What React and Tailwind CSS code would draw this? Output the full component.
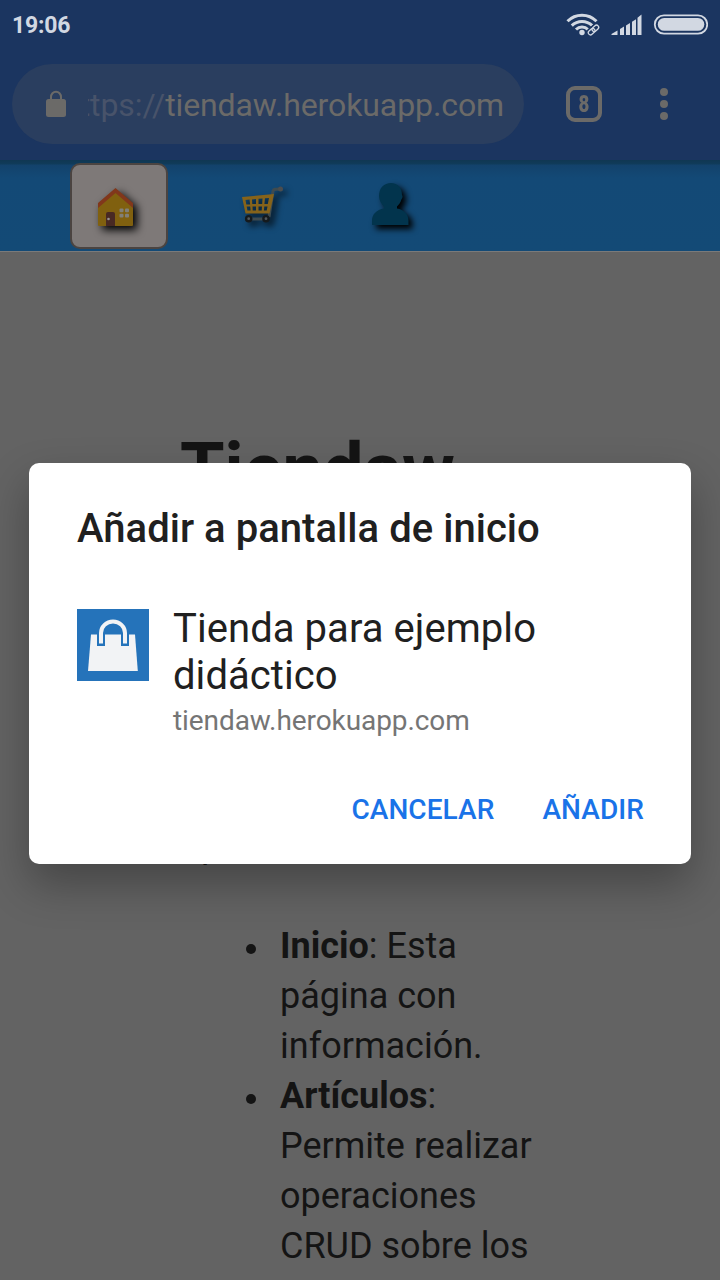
import React from "react";

function StatusBar() {
  return (
    <div className="flex h-12 items-center justify-between pl-3 pr-3 text-[#d2d8e2]">
      <span className="pt-0.5 text-[23px] font-bold leading-none tracking-[-0.2px]">19:06</span>
      <svg width="142" height="24" viewBox="0 0 142 24" fill="none" className="h-6 w-[142px]">
        <g stroke="#d2d8e2" strokeWidth="3">
          <path d="M1.5 9.3a20.5 20.5 0 0 1 29 0" />
          <path d="M5.8 13.6a14.5 14.5 0 0 1 20.4 0" />
          <path d="M10 17.5a8.5 8.5 0 0 1 12 0" />
        </g>
        <circle cx="16" cy="20.5" r="2.7" fill="#d2d8e2" />
        <g transform="rotate(-42 27.5 18)" fill="#1b3560" stroke="#1b3560" strokeWidth="4">
          <rect x="21.8" y="15.7" width="11.4" height="4.6" rx="2.3" />
        </g>
        <g transform="rotate(-42 27.5 18)" stroke="#d2d8e2" strokeWidth="1.3">
          <rect x="21.3" y="15.8" width="7.4" height="4.4" rx="2.2" />
          <rect x="26.3" y="15.8" width="7.4" height="4.4" rx="2.2" />
        </g>
        <g fill="#d2d8e2">
          <path d="M45.5 23v-1l6-3.5V23z" />
          <path d="M54 23v-6l4-2.5V23z" />
          <path d="M60 23v-9.5l4-2.5v12z" />
          <path d="M66 23V9.800l4-2.600V23z" />
          <path d="M71.500 23V5.800l4-3.300V23z" />
        </g>
        <rect x="88.800" y="3.300" width="52.400" height="18.400" rx="9.200" stroke="#d2d8e2" strokeWidth="1.8" />
        <rect x="91.800" y="6" width="46.500" height="12.800" rx="6.400" fill="#d2d8e2" />
      </svg>
    </div>
  );
}

function AddressBar() {
  return (
    <div className="flex h-28 items-start pl-3 pt-4 text-[#6b6a68]">
      <div className="flex h-20 w-[512px] items-center rounded-full bg-[#2a3e5f] pl-[34px]">
        <svg width="20" height="28" viewBox="0 0 20 28" className="shrink-0">
          <path d="M5 10V7a5 5.300 0 0 1 10 0v3" fill="none" stroke="#6b6a68" strokeWidth="2" />
          <rect y="9" width="20" height="18" rx="2.500" fill="#6b6a68" />
        </svg>
        <div className="ml-[22px] mt-px flex w-[416px] justify-end overflow-hidden whitespace-nowrap text-[32px] leading-[44px] tracking-[-0.1px]">
          <span className="text-[#48536a]">https://</span>
          <span>tiendaw.herokuapp.com</span>
        </div>
      </div>
      <div className="ml-[42px] mt-[22px] flex size-9 items-center justify-center rounded-[9px] border-4 border-[#6b6a68] text-[24px] font-black leading-none">
        <span className="scale-x-[0.78]">8</span>
      </div>
      <div className="ml-[58px] mt-6 flex flex-col gap-1">
        <i className="size-2 rounded-full bg-[#6b6a68]" />
        <i className="size-2 rounded-full bg-[#6b6a68]" />
        <i className="size-2 rounded-full bg-[#6b6a68]" />
      </div>
    </div>
  );
}

function HouseIcon() {
  return (
    <svg width="38" height="40" viewBox="0 0 38 40" className="overflow-visible drop-shadow-[4px_4px_4px_#000000]">
      <path d="M1 18 18.500 3 36 18v19a1 1 0 0 1-1 1H2a1 1 0 0 1-1-1z" fill="#80600f" />
      <path d="m1 15 17.500-15L36 15v5L18.500 5 1 20z" fill="#81371b" />
      <path d="M9 38V26a2 2 0 0 1 2-2h5a2 2 0 0 1 2 2v12z" fill="#482923" />
      <circle cx="11.500" cy="31" r="1.300" fill="#969190" />
      <g fill="#828078">
        <rect x="22.500" y="20.500" width="4" height="3.800" rx="1" />
        <rect x="28" y="20.500" width="4" height="3.800" rx="1" />
        <rect x="22.500" y="25.800" width="4" height="3.800" rx="1" />
        <rect x="28" y="25.800" width="4" height="3.800" rx="1" />
      </g>
    </svg>
  );
}

function CartIcon() {
  return (
    <svg width="42" height="38" viewBox="0 0 42 38" fill="none" className="overflow-visible drop-shadow-[4px_4px_3px_#000000b0]">
      <path d="m27 31 4-26c.4-2 2-2 8-2" stroke="#3e4b50" strokeWidth="3" />
      <circle cx="38.500" cy="3" r="2.500" fill="#4b4d4e" />
      <path
        fillRule="evenodd"
        d="M0 11 32 8l-4.500 19.500h-24zM3.500 14l.8 4.400h3.800L7.500 13.600zM10 13.400l.3 4.600H14v-5zM16.500 12.800v5.200h3.700l.3-5.600zM23 12.200l-.6 5.800h3.400l1.200-6.100zM4.700 20.500l.7 4h3.200l-.4-4zM10.500 20.500l.2 4H14v-4zM16.500 20.500v4h3.200l.3-4zM22.300 20.500l-.4 4h2.800l.8-4z"
        fill="#86631a"
      />
      <path d="M7 33h18" stroke="#3e4b50" strokeWidth="3" />
      <g fill="#52585b" stroke="#151a1d" strokeWidth="2.400">
        <circle cx="6.700" cy="32.700" r="2.600" />
        <circle cx="24" cy="32.700" r="2.600" />
      </g>
    </svg>
  );
}

function PersonIcon() {
  return (
    <svg width="38" height="43" viewBox="0 0 38 43" className="overflow-visible drop-shadow-[4px_4px_3px_#000000]">
      <path
        d="M19 0C26 0 30 5 30 12c1 1 .7 3-.6 4.500C28.500 20 27 21.500 25 23.500v2c7 1 11.500 6 11.500 12V42H0v-4.500c0-6 4.500-11 12-12v-2C9 21 7 17 7 13 7 5 12 0 19 0Z"
        fill="#02344d"
      />
    </svg>
  );
}

function SiteNav() {
  return (
    <nav className="flex h-[92px] items-start border-b border-[#7a7a7a] bg-[linear-gradient(#103752_0px,#103b5a_4px,#13426b_5px,#134976_18px,#134a76_100%)] pl-[70px] pt-[3px]">
      <div className="flex h-[86px] w-[98px] items-start rounded-[10px] border-2 border-[#4b4441] bg-[#7e7978] pl-[25px] pt-[23px]">
        <HouseIcon />
      </div>
      <div className="ml-[74px] mt-[23px]">
        <CartIcon />
      </div>
      <div className="ml-[88px] mt-5">
        <PersonIcon />
      </div>
    </nav>
  );
}

function PageContent() {
  return (
    <main className="px-[180px] pt-[175px] text-[#141414]">
      <h1 className="h-[100px] whitespace-nowrap text-[72px] font-bold leading-[86px]">Tiendaw</h1>
      <p className="-ml-0.5 mt-[293px] h-[50px] pl-[23px] text-[36px] leading-[50px]">p</p>
      <ul className="ml-[66px] mt-[51px] w-[300px] text-[36px] leading-[50px]">
        <li className="flex">
          <i className="mt-[23px] size-2.5 shrink-0 rounded-full bg-[#141414]" />
          <span className="ml-[24px]">
            <b>Inicio</b>: Esta<br />página con<br />información.
          </span>
        </li>
        <li className="flex">
          <i className="mt-[23px] size-2.5 shrink-0 rounded-full bg-[#141414]" />
          <span className="ml-[24px] whitespace-nowrap">
            <b>Artículos</b>:<br />Permite realizar<br />operaciones<br />CRUD sobre los
          </span>
        </li>
      </ul>
    </main>
  );
}

function BagIcon() {
  return (
    <svg width="72" height="72" viewBox="0 0 72 72" className="shrink-0">
      <rect width="72" height="72" fill="#2573ba" />
      <path d="M14 25.500h44L60.800 62H11z" fill="#f2f3f5" />
      <path d="M20 25h8v12h-8zM44 25h8v12h-8z" fill="#2573ba" />
      <path d="M24 34.500V24a12 11.500 0 0 1 24 0v10.500" fill="none" stroke="#f2f3f5" strokeWidth="4" />
    </svg>
  );
}

function InstallDialog() {
  return (
    <section
      role="dialog"
      className="absolute left-[29px] top-[463px] flex h-[401px] w-[662px] flex-col rounded-[10px] bg-white px-12 pt-[42px] shadow-[0_20px_44px_rgba(0,0,0,0.3)]"
    >
      <h2 className="whitespace-nowrap text-[40px] font-medium leading-[48px] tracking-[0.04px] text-[#202020]">
        Añadir a pantalla de inicio
      </h2>
      <div className="mt-[56px] flex gap-6">
        <BagIcon />
        <div className="-mt-1 whitespace-nowrap">
          <p className="text-[40px] leading-[47px] tracking-[0.06px] text-[#202020]">
            Tienda para ejemplo<br />didáctico
          </p>
          <p className="pt-px text-[28px] leading-[42px] tracking-[-0.08px] text-[#757575]">tiendaw.herokuapp.com</p>
        </div>
      </div>
      <div className="-mr-px mt-[51px] flex justify-end gap-12 whitespace-nowrap text-[28px] font-medium leading-[34px] tracking-[0.08px] text-[#1a73e8]">
        <button>CANCELAR</button>
        <button>AÑADIR</button>
      </div>
    </section>
  );
}

export default function App() {
  return (
    <div className="relative h-[1280px] w-[720px] overflow-hidden bg-[#636363] font-[Roboto,sans-serif]">
      <header className="h-[160px] bg-[#1b3560]">
        <StatusBar />
        <AddressBar />
      </header>
      <SiteNav />
      <PageContent />
      <InstallDialog />
    </div>
  );
}
